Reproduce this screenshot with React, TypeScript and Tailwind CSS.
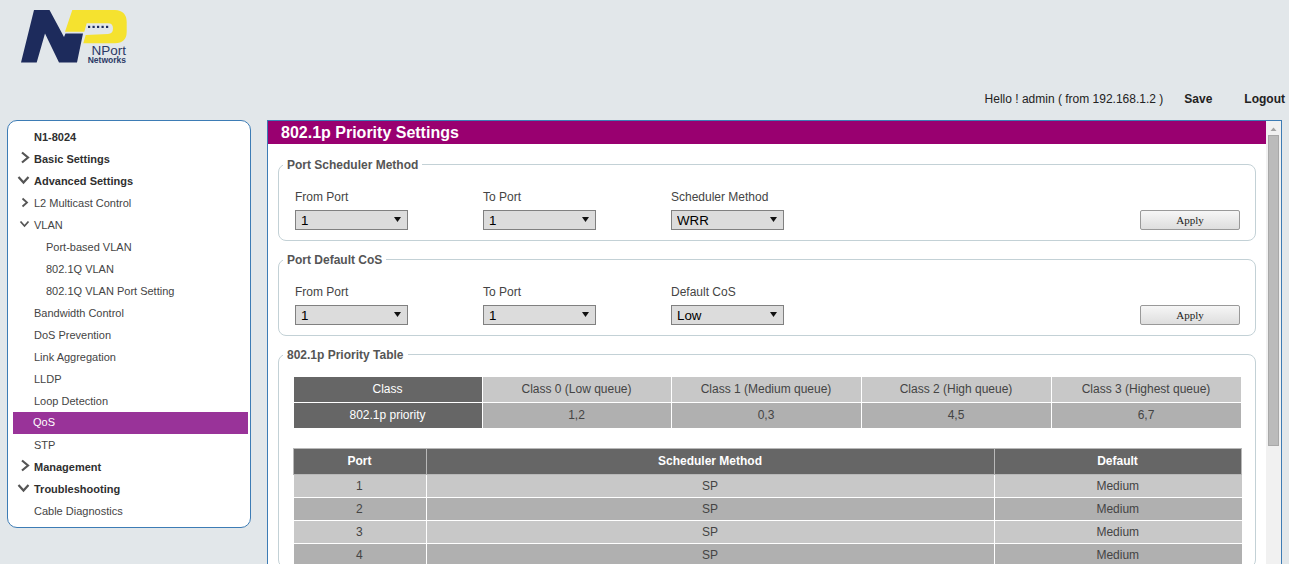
const font = { fontFamily: '"Liberation Sans", Arial, sans-serif' };

type NavItem = {
  label: string;
  indent: string;
  bold?: boolean;
  active?: boolean;
  arrow?: 'right' | 'down' | 'smallRight' | 'smallDown';
};

const navItems: NavItem[] = [
  { label: 'N1-8024', indent: 'pl-[21px]', bold: true },
  { label: 'Basic Settings', indent: 'pl-[21px]', bold: true, arrow: 'right' },
  { label: 'Advanced Settings', indent: 'pl-[21px]', bold: true, arrow: 'down' },
  { label: 'L2 Multicast Control', indent: 'pl-[21px]', arrow: 'smallRight' },
  { label: 'VLAN', indent: 'pl-[21px]', arrow: 'smallDown' },
  { label: 'Port-based VLAN', indent: 'pl-[33px]' },
  { label: '802.1Q VLAN', indent: 'pl-[33px]' },
  { label: '802.1Q VLAN Port Setting', indent: 'pl-[33px]' },
  { label: 'Bandwidth Control', indent: 'pl-[21px]' },
  { label: 'DoS Prevention', indent: 'pl-[21px]' },
  { label: 'Link Aggregation', indent: 'pl-[21px]' },
  { label: 'LLDP', indent: 'pl-[21px]' },
  { label: 'Loop Detection', indent: 'pl-[21px]' },
  { label: 'QoS', indent: 'pl-[20px]', active: true },
  { label: 'STP', indent: 'pl-[21px]' },
  { label: 'Management', indent: 'pl-[21px]', bold: true, arrow: 'right' },
  { label: 'Troubleshooting', indent: 'pl-[21px]', bold: true, arrow: 'down' },
  { label: 'Cable Diagnostics', indent: 'pl-[21px]' },
];

function Arrow({ kind }: { kind: NonNullable<NavItem['arrow']> }) {
  if (kind === 'right') {
    return (
      <svg className="absolute left-[7px] top-[3px]" width="10" height="14" viewBox="0 0 10 14">
        <path d="M2 1.5 L8 6.5 L2 11.5" fill="none" stroke="#555" strokeWidth="2.2" />
      </svg>
    );
  }
  if (kind === 'down') {
    return (
      <svg className="absolute left-[4px] top-[5px]" width="14" height="12" viewBox="0 0 14 12">
        <path d="M1.5 2 L6.5 7.5 L11.5 2" fill="none" stroke="#555" strokeWidth="2.2" />
      </svg>
    );
  }
  if (kind === 'smallRight') {
    return (
      <svg className="absolute left-[8px] top-[5px]" width="9" height="12" viewBox="0 0 9 12">
        <path d="M1.5 1.5 L6 5.5 L1.5 9.5" fill="none" stroke="#555" strokeWidth="1.8" />
      </svg>
    );
  }
  return (
    <svg className="absolute left-[6px] top-[6px]" width="11" height="10" viewBox="0 0 11 10">
      <path d="M1.5 1.5 L5.5 6 L9.5 1.5" fill="none" stroke="#555" strokeWidth="1.8" />
    </svg>
  );
}

function Logo() {
  return (
    <div className="relative w-[110px] h-[56px]">
      <svg width="110" height="56" viewBox="0 0 110 56" className="block">
        <path d="M52.3 0 L95 0 Q106.5 0.5 106.7 12 L106.7 22 Q106.5 33 95 33.3 L63.3 33.3 L65.7 25 L88 24 Q93 23.5 93 18.5 Q93 13.3 88 13.3 L66.7 13.3 L64.3 21.7 L45 21.7 Z" fill="#f5e22f" />
        <path d="M14 0 L29.5 0 L44 27 L45.5 23.5 L63 23.5 L57 52.5 L39 52.5 L25 23.5 L16.7 52.5 L1 52.5 Z" fill="#1d2b5c" />
        <path d="M45.5 22.5 L63.5 22.5" stroke="#dfe3e8" strokeWidth="1" />
        <g fill="#1d2b5c">
          <rect x="68" y="15.8" width="2.2" height="2.2" />
          <rect x="72.5" y="15.8" width="2.2" height="2.2" />
          <rect x="77" y="15.8" width="2.2" height="2.2" />
          <rect x="81.5" y="15.8" width="2.2" height="2.2" />
          <rect x="86" y="15.8" width="2.2" height="2.2" />
        </g>
      </svg>
      <div className="absolute right-[4px] top-[36px] text-[13.5px] leading-[10px] text-[#2c3a66]" style={font}>NPort</div>
      <div className="absolute right-[4px] top-[46px] text-[8.5px] leading-[8px] font-bold text-[#2c3a66]" style={font}>Networks</div>
    </div>
  );
}

function Select({ value }: { value: string }) {
  return (
    <div className="relative w-[113px] h-[20px]">
      <select
        defaultValue={value}
        className="block w-full h-full appearance-none bg-[#dcdcdc] border border-[#808080] text-[13.33px] text-black pl-[5px]"
        style={font}
      >
        <option>{value}</option>
      </select>
      <svg className="absolute left-[99px] top-[7px] pointer-events-none" width="7" height="5" viewBox="0 0 7 5">
        <path d="M0 0 L7 0 L3.5 5 Z" fill="#111" />
      </svg>
    </div>
  );
}

function Field({ label, value }: { label: string; value: string }) {
  return (
    <div className="w-[188px]">
      <div className="text-[12px] leading-[14px] text-[#444] mb-[6px]">{label}</div>
      <Select value={value} />
    </div>
  );
}

function Legend({ title }: { title: string }) {
  return (
    <legend className="text-[12px] leading-[14px] font-bold text-[#555] pt-[2px] px-[4px] -ml-[12px]">
      {title}
    </legend>
  );
}

function SettingsGroup({ title, third, thirdValue }: { title: string; third: string; thirdValue: string }) {
  return (
    <fieldset className="min-w-0 border border-[#c3d1d6] rounded-[8px] pl-[16px] pr-[15px] pt-[18px] pb-[10px] mb-[10px]">
      <Legend title={title} />
      <div className="flex items-end">
        <Field label="From Port" value="1" />
        <Field label="To Port" value="1" />
        <Field label={third} value={thirdValue} />
        <button
          className="ml-auto w-[100px] h-[20px] border border-[#999] rounded-[2px] bg-gradient-to-b from-[#f6f6f6] to-[#dedede] text-[11px] text-[#222]"
          style={{ fontFamily: '"Liberation Serif", "Times New Roman", serif' }}
        >
          Apply
        </button>
      </div>
    </fieldset>
  );
}

const classes = [
  ['Class 0 (Low queue)', '1,2'],
  ['Class 1 (Medium queue)', '0,3'],
  ['Class 2 (High queue)', '4,5'],
  ['Class 3 (Highest queue)', '6,7'],
];

function ClassTable() {
  return (
    <div className="ml-[-1px] w-[947px] grid grid-cols-[188px_189px_190px_190px_190px] gap-y-[1px] text-[12px] text-[#444] text-center">
      <div className="h-[25px] leading-[25px] pr-[1px] bg-[#666] text-white">Class</div>
      {classes.map(([name]) => (
        <div key={name} className="h-[25px] leading-[25px] pr-[1px] bg-[#c8c8c8] border-l border-white">{name}</div>
      ))}
      <div className="h-[25px] leading-[25px] pr-[1px] bg-[#666] text-white">802.1p priority</div>
      {classes.map(([name, value]) => (
        <div key={name} className="h-[25px] leading-[25px] pr-[1px] bg-[#b0b0b0] border-l border-white">{value}</div>
      ))}
    </div>
  );
}

function PortTable() {
  return (
    <table className="mt-[20px] ml-[-2px] w-[949px] max-w-none border-collapse text-[12px] text-[#444] text-center table-fixed">
      <thead>
        <tr className="bg-[#666] text-white h-[26px]">
          <th className="w-[133px] border border-[#b8b8b8] font-bold pr-[1px] pb-[2px]">Port</th>
          <th className="w-[568px] border border-[#b8b8b8] font-bold pr-[1px] pb-[2px]">Scheduler Method</th>
          <th className="border border-[#b8b8b8] font-bold pr-[1px] pb-[2px]">Default</th>
        </tr>
      </thead>
      <tbody>
        {[1, 2, 3, 4].map((port) => (
          <tr key={port} className={`h-[23px] ${port % 2 ? 'bg-[#c8c8c8]' : 'bg-[#b0b0b0]'}`}>
            <td className="border border-white border-l-0 pr-[1px]">{port}</td>
            <td className="border border-white pr-[1px]">SP</td>
            <td className="border border-white border-r-0 pr-[1px]">Medium</td>
          </tr>
        ))}
      </tbody>
    </table>
  );
}

export default function App() {
  return (
    <div className="w-[1289px] h-[564px] overflow-hidden bg-[#e2e7ea] text-[12px]" style={font}>
      <div className="h-[120px] flex flex-col">
        <div className="pl-[20px] pt-[10px] h-[90px]">
          <Logo />
        </div>
        <div className="flex justify-end items-center h-[18px] pr-[4px] text-[12px] text-[#222]">
          <span>Hello ! admin ( from 192.168.1.2 )</span>
          <span className="ml-[21px] font-bold">Save</span>
          <span className="ml-[32px] font-bold">Logout</span>
        </div>
      </div>

      <div className="flex items-start pl-[7px] gap-[16px]">
        <aside className="w-[244px] h-[408px] bg-white border border-[#3d7cb5] rounded-[10px] pt-[5px] pl-[5px] pr-[2px]">
          {navItems.map((item) => (
            <div
              key={item.label}
              className={`relative h-[22px] text-[11px] ${item.indent} ${item.bold ? 'font-bold text-[#2f2f2f]' : 'text-[#444]'} ${item.active ? 'bg-[#993399] text-white leading-[20px]' : 'leading-[22px]'}`}
            >
              {item.arrow && <Arrow kind={item.arrow} />}
              {item.label}
            </div>
          ))}
        </aside>

        <main className="w-[1015px] h-[444px] flex bg-white border border-[#3d7cb5] border-b-0">
          <div className="w-[998px] shrink-0 overflow-hidden">
            <h1 className="h-[23px] leading-[23px] bg-[#990070] text-white text-[16px] font-bold pl-[13px]">802.1p Priority Settings</h1>
            <div className="pl-[10px] pr-[10px] pt-[12px]">
              <SettingsGroup title="Port Scheduler Method" third="Scheduler Method" thirdValue="WRR" />
              <SettingsGroup title="Port Default CoS" third="Default CoS" thirdValue="Low" />
              <fieldset className="min-w-0 border border-[#c3d1d6] rounded-[8px] pl-[16px] pr-[15px] pt-[15px]">
                <Legend title="802.1p Priority Table" />
                <ClassTable />
                <PortTable />
              </fieldset>
            </div>
          </div>
          <div className="w-[15px] bg-[#f1f1f1] flex flex-col items-center">
            <svg width="15" height="14" viewBox="0 0 15 14" className="shrink-0">
              <path d="M4.5 10 L7.5 6.5 L10.5 10 Z" fill="#a3a3a3" />
            </svg>
            <div className="w-[11px] h-[311px] bg-[#bbb] border border-[#a8a8a8]" />
          </div>
        </main>
      </div>
    </div>
  );
}
